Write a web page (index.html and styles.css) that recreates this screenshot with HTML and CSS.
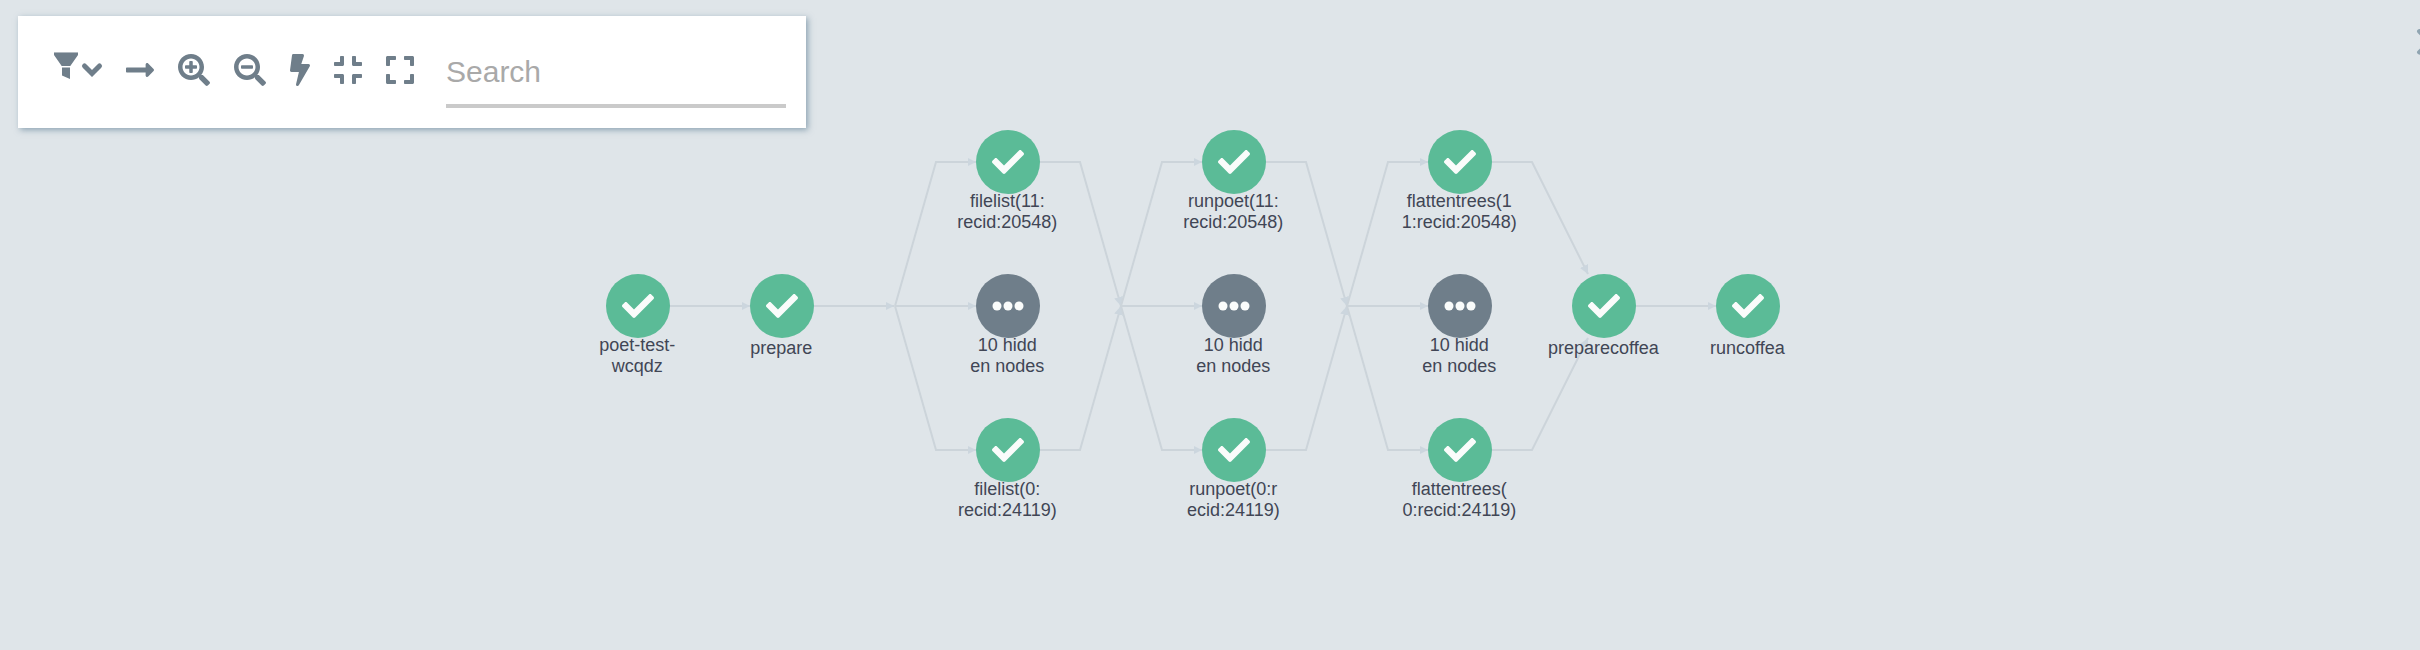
FILE: index.html
```html
<!DOCTYPE html>
<html lang="en">
<head>
<meta charset="utf-8">
<title>Workflow graph</title>
<link rel="stylesheet" href="styles.css">
</head>
<body>
<main class="workflow">
  <svg class="graph" width="2420" height="650" viewBox="0 0 2420 650">
    <defs>
      <marker id="arrow" class="arrow" viewBox="0 0 8 8" refX="8" refY="4" markerWidth="8" markerHeight="8" markerUnits="userSpaceOnUse" orient="auto"><path d="M0 0L8 4L0 8z"/></marker>
      <marker id="arrow-join" class="arrow" viewBox="0 0 8 8" refX="8" refY="4" markerWidth="9" markerHeight="9" markerUnits="userSpaceOnUse" orient="auto"><path d="M0 0L8 4L0 8z"/></marker>
      <g id="done">
        <circle class="disc-done" r="32"/>
        <path class="mark" transform="translate(-16 -16) scale(.0625)" d="M173.898 439.404l-166.4-166.4c-9.997-9.997-9.997-26.206 0-36.204l36.203-36.204c9.997-9.998 26.207-9.998 36.204 0L192 312.69 432.095 72.596c9.997-9.997 26.207-9.997 36.204 0l36.203 36.204c9.997 9.997 9.997 26.206 0 36.204l-294.4 294.401c-9.998 9.997-26.207 9.997-36.204-.001z"/>
      </g>
      <g id="hidden">
        <circle class="disc-hidden" r="32"/>
        <circle class="mark" cx="-11" r="4.5"/><circle class="mark" r="4.5"/><circle class="mark" cx="11" r="4.5"/>
      </g>
    </defs>

    <g class="edges">
      <path d="M670 306H750"/>
      <path d="M814 306H894"/>
      <path d="M895 306L936 162H976"/>
      <path d="M895 306H976"/>
      <path d="M895 306L936 450H976"/>
      <path class="join" d="M1040 162H1080L1121 306"/>
      <path class="join" d="M1040 450H1080L1121 306"/>
      <path d="M1121 306L1162 162H1202"/>
      <path d="M1121 306H1202"/>
      <path d="M1121 306L1162 450H1202"/>
      <path class="join" d="M1266 162H1306L1347 306"/>
      <path class="join" d="M1266 450H1306L1347 306"/>
      <path d="M1347 306L1388 162H1428"/>
      <path d="M1347 306H1428"/>
      <path d="M1347 306L1388 450H1428"/>
      <path class="join" d="M1492 162H1532L1588 274"/>
      <path class="join" d="M1492 450H1532L1588 338"/>
      <path d="M1636 306H1716"/>
    </g>

    <g class="labels">
      <g transform="translate(638 306)"><use href="#done"/><text x="-.7" y="45">poet-test-</text><text x="-.7" y="65.500">wcqdz</text></g>
      <g transform="translate(782 306)"><use href="#done"/><text x="-.7" y="48">prepare</text></g>
      <g transform="translate(1008 162)"><use href="#done"/><text x="-.7" y="45">filelist(11:</text><text x="-.7" y="65.500">recid:20548)</text></g>
      <g transform="translate(1008 306)"><use href="#hidden"/><text x="-.7" y="45">10 hidd</text><text x="-.7" y="65.500">en nodes</text></g>
      <g transform="translate(1008 450)"><use href="#done"/><text x="-.7" y="45">filelist(0:</text><text x="-.7" y="65.500">recid:24119)</text></g>
      <g transform="translate(1234 162)"><use href="#done"/><text x="-.7" y="45">runpoet(11:</text><text x="-.7" y="65.500">recid:20548)</text></g>
      <g transform="translate(1234 306)"><use href="#hidden"/><text x="-.7" y="45">10 hidd</text><text x="-.7" y="65.500">en nodes</text></g>
      <g transform="translate(1234 450)"><use href="#done"/><text x="-.7" y="45">runpoet(0:r</text><text x="-.7" y="65.500">ecid:24119)</text></g>
      <g transform="translate(1460 162)"><use href="#done"/><text x="-.7" y="45">flattentrees(1</text><text x="-.7" y="65.500">1:recid:20548)</text></g>
      <g transform="translate(1460 306)"><use href="#hidden"/><text x="-.7" y="45">10 hidd</text><text x="-.7" y="65.500">en nodes</text></g>
      <g transform="translate(1460 450)"><use href="#done"/><text x="-.7" y="45">flattentrees(</text><text x="-.7" y="65.500">0:recid:24119)</text></g>
      <g transform="translate(1604 306)"><use href="#done"/><text x="-.7" y="48">preparecoffea</text></g>
      <g transform="translate(1748 306)"><use href="#done"/><text x="-.7" y="48">runcoffea</text></g>
    </g>
  </svg>

  <div class="toolbar">
    <svg class="icon filter" width="48" height="32" viewBox="0 0 48 32"><path class="faint" d="M0 0H24V1H0z"/><path d="M0 1H24V3L16.300 14H7.700L0 3zM8 15.500H16V27L8 23.500z"/><path class="chevron" d="M30.500 14L38 21.500L45.500 14"/></svg>
    <svg class="icon arrow-right" width="28" height="32" viewBox="0 0 448 512"><path d="M313.941 216H12c-6.627 0-12 5.373-12 12v56c0 6.627 5.373 12 12 12h301.941v46.059c0 21.382 25.851 32.090 40.971 16.971l86.059-86.059c9.373-9.373 9.373-24.569 0-33.941l-86.059-86.059c-15.119-15.119-40.971-4.411-40.971 16.971V216z"/></svg>
    <svg class="icon" width="32" height="32" viewBox="0 0 512 512"><path d="M304 192v32c0 6.600-5.400 12-12 12h-56v56c0 6.600-5.400 12-12 12h-32c-6.600 0-12-5.400-12-12v-56h-56c-6.600 0-12-5.400-12-12v-32c0-6.600 5.400-12 12-12h56v-56c0-6.600 5.400-12 12-12h32c6.600 0 12 5.400 12 12v56h56c6.600 0 12 5.400 12 12zm201 284.700L476.700 505c-9.400 9.400-24.600 9.400-33.900 0L343 405.300c-4.500-4.500-7-10.600-7-17V372c-35.300 27.600-79.700 44-128 44C93.100 416 0 322.900 0 208S93.100 0 208 0s208 93.100 208 208c0 48.300-16.400 92.700-44 128h16.300c6.400 0 12.500 2.500 17 7l99.700 99.700c9.300 9.400 9.300 24.600 0 34zM344 208c0-75.200-60.800-136-136-136S72 132.800 72 208s60.800 136 136 136 136-60.800 136-136z"/></svg>
    <svg class="icon" width="32" height="32" viewBox="0 0 512 512"><path d="M304 192v32c0 6.600-5.400 12-12 12H124c-6.600 0-12-5.400-12-12v-32c0-6.600 5.400-12 12-12h168c6.600 0 12 5.400 12 12zm201 284.700L476.700 505c-9.400 9.400-24.600 9.400-33.900 0L343 405.300c-4.500-4.500-7-10.600-7-17V372c-35.300 27.600-79.700 44-128 44C93.100 416 0 322.900 0 208S93.100 0 208 0s208 93.100 208 208c0 48.300-16.400 92.700-44 128h16.300c6.400 0 12.500 2.500 17 7l99.700 99.700c9.300 9.400 9.300 24.600 0 34zM344 208c0-75.200-60.800-136-136-136S72 132.800 72 208s60.800 136 136 136 136-60.800 136-136z"/></svg>
    <svg class="icon" width="20" height="32" viewBox="0 0 320 512"><path d="M296 160H180.600l42.600-129.800C227.200 15 215.700 0 200 0H56C44 0 33.800 8.900 32.200 20.800l-32 240C-1.700 275.200 9.500 288 24 288h118.700L96.600 482.500c-3.600 15.200 8 29.500 23.300 29.500 8.400 0 16.400-4.400 20.800-12l176-304c9.300-15.900-2.200-36-20.700-36z"/></svg>
    <svg class="icon" width="28" height="32" viewBox="0 0 448 512"><path d="M436 192H312c-13.300 0-24-10.700-24-24V44c0-6.600 5.400-12 12-12h40c6.600 0 12 5.400 12 12v84h84c6.600 0 12 5.400 12 12v40c0 6.600-5.400 12-12 12zm-276-24V44c0-6.600-5.400-12-12-12h-40c-6.600 0-12 5.400-12 12v84H12c-6.600 0-12 5.400-12 12v40c0 6.600 5.400 12 12 12h124c13.300 0 24-10.700 24-24zm0 300V344c0-13.300-10.700-24-24-24H12c-6.600 0-12 5.400-12 12v40c0 6.600 5.400 12 12 12h84v84c0 6.600 5.400 12 12 12h40c6.600 0 12-5.400 12-12zm192 0v-84h84c6.600 0 12-5.400 12-12v-40c0-6.600-5.400-12-12-12H312c-13.300 0-24 10.700-24 24v124c0 6.600 5.400 12 12 12h40c6.600 0 12-5.400 12-12z"/></svg>
    <svg class="icon" width="28" height="32" viewBox="0 0 448 512"><path d="M0 180V56c0-13.300 10.700-24 24-24h124c6.600 0 12 5.400 12 12v40c0 6.600-5.400 12-12 12H64v84c0 6.600-5.400 12-12 12H12c-6.600 0-12-5.400-12-12zM288 44v40c0 6.600 5.400 12 12 12h84v84c0 6.600 5.400 12 12 12h40c6.600 0 12-5.400 12-12V56c0-13.300-10.700-24-24-24H300c-6.600 0-12 5.400-12 12zm148 276h-40c-6.600 0-12 5.400-12 12v84h-84c-6.600 0-12 5.400-12 12v40c0 6.600 5.400 12 12 12h124c13.300 0 24-10.700 24-24V332c0-6.600-5.400-12-12-12zM160 468v-40c0-6.600-5.400-12-12-12H64v-84c0-6.600-5.400-12-12-12H12c-6.600 0-12 5.400-12 12v124c0 13.300 10.700 24 24 24h124c6.600 0 12-5.400 12-12z"/></svg>
    <input class="search" type="text" placeholder="Search" aria-label="Search">
  </div>

  <svg class="close" width="4" height="30" viewBox="0 0 4 30"><path d="M3.300 4.300L14 15L3.300 25.300"/></svg>
</main>
</body>
</html>
```
FILE: styles.css
```css
* { box-sizing: border-box; }

body {
  margin: 0;
  overflow: hidden;
  background: #dfe5e9;
  font-family: "Liberation Sans", Arial, sans-serif;
}

.workflow {
  position: relative;
  height: 650px;
  padding: 16px 18px;
}

.graph {
  position: absolute;
  inset: 0;
}

.edges path {
  fill: none;
  stroke: #ccd4da;
  stroke-width: 2;
  marker-end: url(#arrow);
}

.edges .join { marker-end: url(#arrow-join); }
.arrow path { fill: #ccd6de; }
.disc-done { fill: #5bbb97; }
.disc-hidden { fill: #6f7e8a; }
.mark { fill: #fafcfb; }

.labels text {
  fill: #414655;
  font-size: 18px;
  text-anchor: middle;
}

.toolbar {
  position: relative;
  display: flex;
  align-items: flex-start;
  gap: 24px;
  width: 788px;
  height: 112px;
  padding: 38px 20px 0 36px;
  background: #fff;
  box-shadow: 2px 2px 6px rgba(97, 129, 151, .65);
}

.icon {
  flex: none;
  overflow: visible;
  fill: #6f7e8a;
}

.filter { margin-top: -2px; }
.faint { opacity: .55; }

.chevron {
  fill: none;
  stroke: #6f7e8a;
  stroke-width: 5;
  stroke-linecap: round;
}

.search {
  width: 340px;
  height: 56px;
  margin: -2px 0 0 8px;
  padding: 0 0 12px;
  border: 0;
  border-bottom: 4px solid #cacaca;
  outline: 0;
  background: transparent;
  font: 30px "Liberation Sans", Arial, sans-serif;
}

.search::placeholder {
  color: #a9a9a9;
  opacity: 1;
}

.close {
  position: absolute;
  top: 27px;
  right: 0;
  fill: none;
  stroke: #8fa4b1;
  stroke-width: 4.500;
  stroke-linecap: round;
}
```
